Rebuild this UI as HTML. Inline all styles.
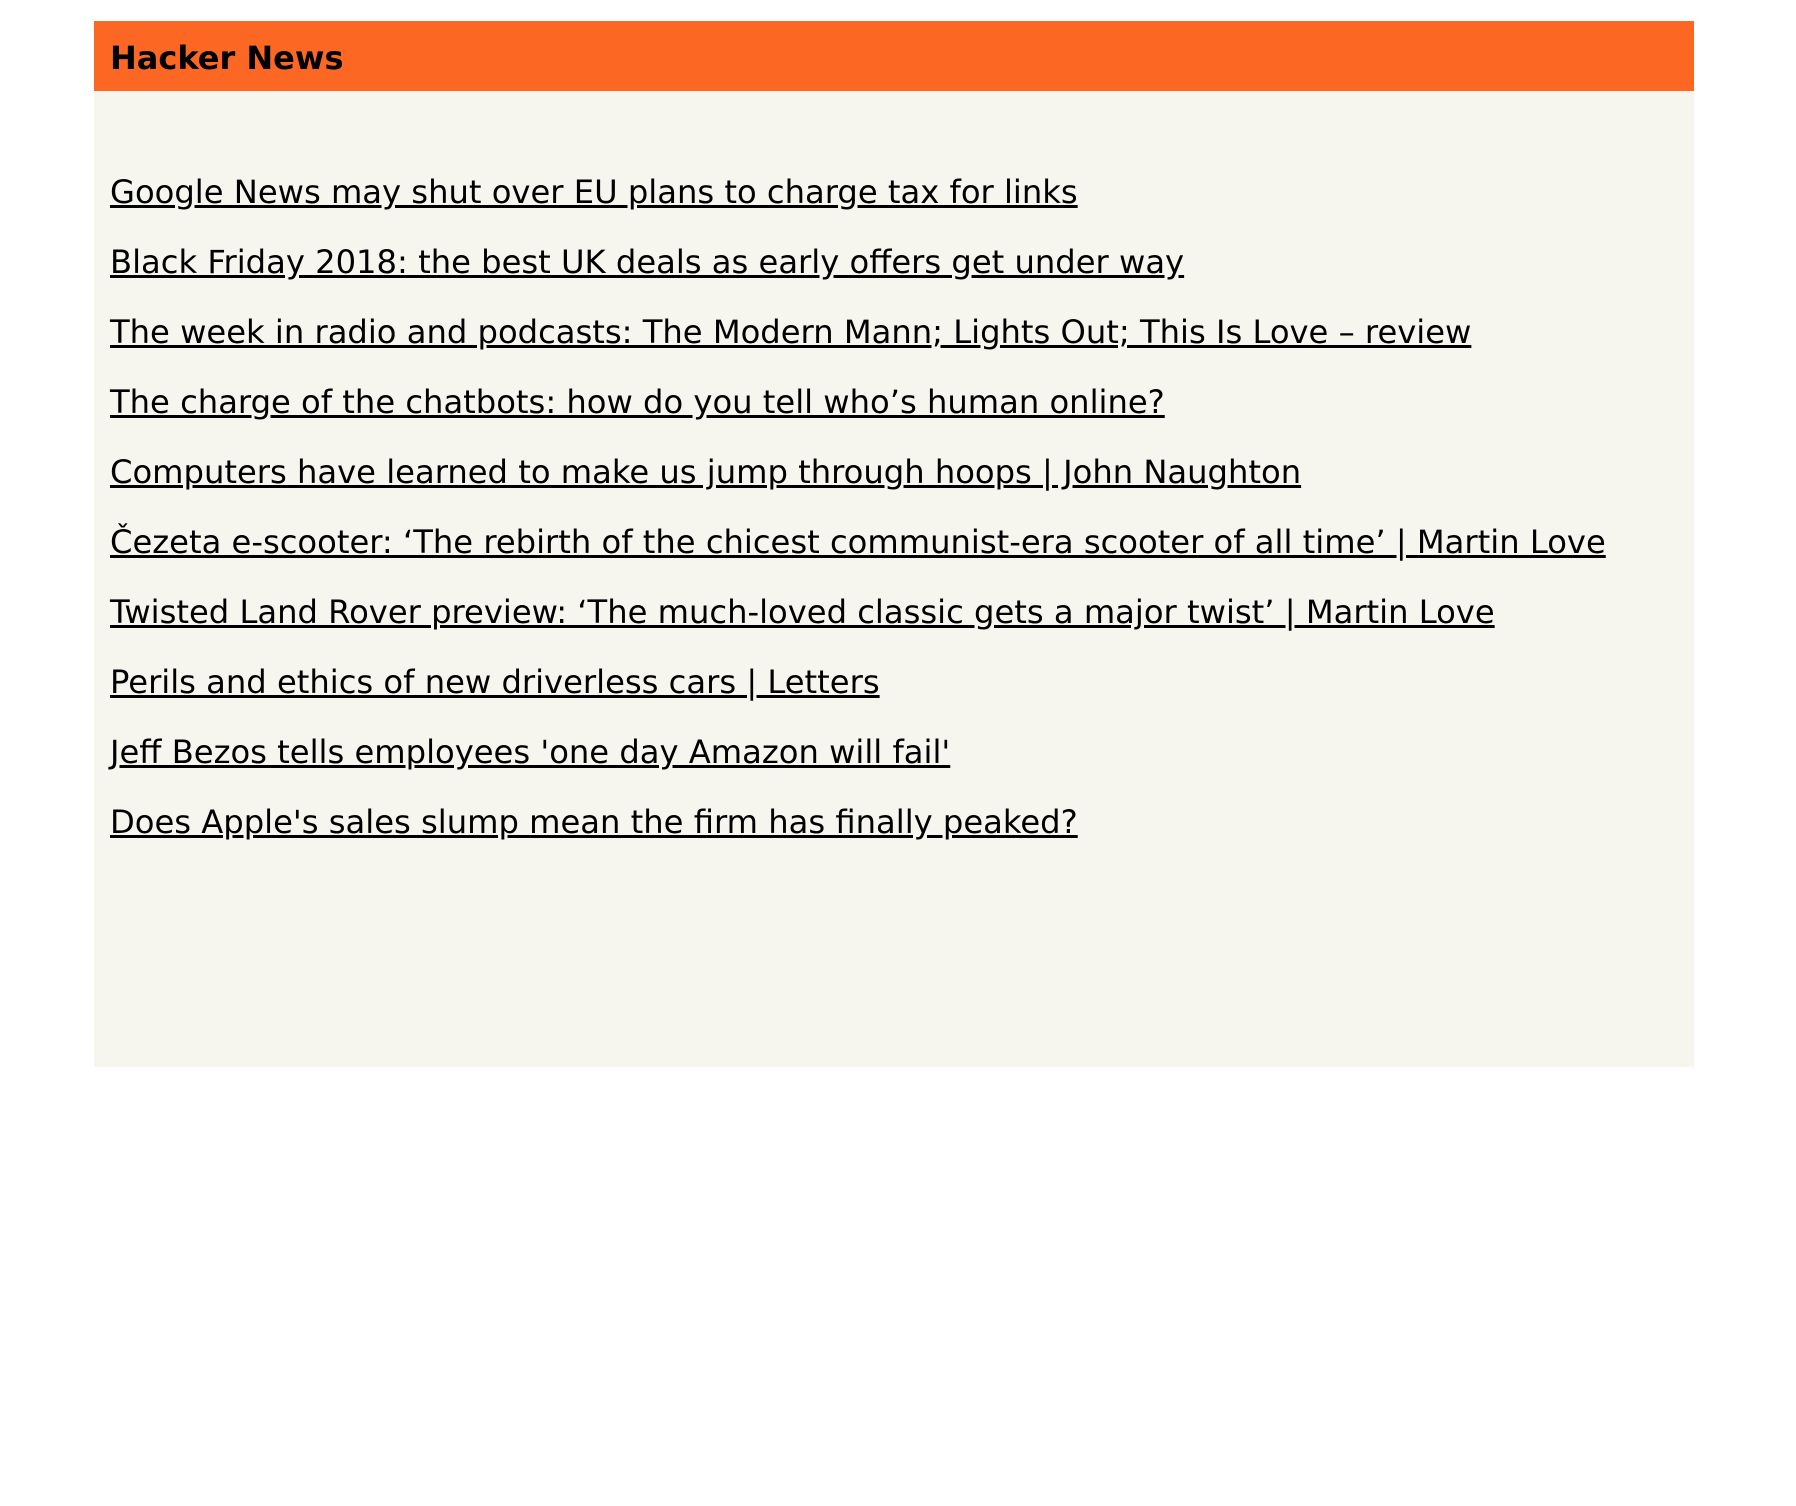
<!DOCTYPE html>
<html><head><meta charset="utf-8"><style>
html,body{margin:0;padding:0;background:#fff;width:1796px;height:1506px;overflow:hidden}
body{font-family:"DejaVu Sans","Liberation Sans",sans-serif;}
#box{position:absolute;left:94px;top:21px;width:1600px;height:1046px;background:#f6f6ef}
#hd{position:absolute;left:0;top:0;width:1600px;height:70px;background:#fc6824}
#hd span{position:absolute;left:16px;top:37px;font-weight:bold;font-size:32px;line-height:0;color:#000}
a{position:absolute;left:16px;font-size:32.2px;line-height:0;color:#000;text-decoration:underline;white-space:nowrap}
</style></head><body>
<div id="box">
<div id="hd"><span>Hacker News</span></div>
<a style="top:171px">Google News may shut over EU plans to charge tax for links</a>
<a style="top:241px">Black Friday 2018: the best UK deals as early offers get under way</a>
<a style="top:311px">The week in radio and podcasts: The Modern Mann; Lights Out; This Is Love – review</a>
<a style="top:381px">The charge of the chatbots: how do you tell who’s human online?</a>
<a style="top:451px">Computers have learned to make us jump through hoops | John Naughton</a>
<a style="top:521px">Čezeta e-scooter: ‘The rebirth of the chicest communist-era scooter of all time’ | Martin Love</a>
<a style="top:591px">Twisted Land Rover preview: ‘The much-loved classic gets a major twist’ | Martin Love</a>
<a style="top:661px">Perils and ethics of new driverless cars | Letters</a>
<a style="top:731px">Jeff Bezos tells employees 'one day Amazon will fail'</a>
<a style="top:801px">Does Apple's sales slump mean the firm has finally peaked?</a>
</div>
</body></html>
